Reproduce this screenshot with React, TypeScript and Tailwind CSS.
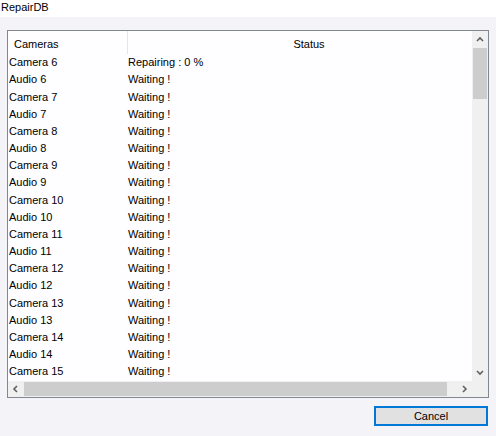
const rows: [string, string][] = [
  ["Camera 6", "Repairing : 0 %"],
  ["Audio 6", "Waiting !"],
  ["Camera 7", "Waiting !"],
  ["Audio 7", "Waiting !"],
  ["Camera 8", "Waiting !"],
  ["Audio 8", "Waiting !"],
  ["Camera 9", "Waiting !"],
  ["Audio 9", "Waiting !"],
  ["Camera 10", "Waiting !"],
  ["Audio 10", "Waiting !"],
  ["Camera 11", "Waiting !"],
  ["Audio 11", "Waiting !"],
  ["Camera 12", "Waiting !"],
  ["Audio 12", "Waiting !"],
  ["Camera 13", "Waiting !"],
  ["Audio 13", "Waiting !"],
  ["Camera 14", "Waiting !"],
  ["Audio 14", "Waiting !"],
  ["Camera 15", "Waiting !"],
];

function Chevron({ dir }: { dir: "up" | "down" | "left" | "right" }) {
  const pts = {
    up: "1,5 4,2 7,5",
    down: "1,2 4,5 7,2",
    left: "5,1 2,4 5,7",
    right: "3,1 6,4 3,7",
  }[dir];
  return (
    <svg width="8" height="8" viewBox="0 0 8 8">
      <polyline points={pts} fill="none" stroke="#606060" strokeWidth="1.6" />
    </svg>
  );
}

export default function App() {
  return (
    <div className="flex h-[436px] w-[496px] flex-col bg-[#f4f3f8] font-['Liberation_Sans',Arial,sans-serif] text-[11px] text-black">
      <div className="h-[17px] bg-white pl-[1px] leading-[15px]">RepairDB</div>

      {/* list view */}
      <div className="ml-[7px] mt-[13px] grid h-[368px] w-[482px] grid-cols-[1fr_16px] grid-rows-[1fr_16px] overflow-hidden border border-[#828790] bg-[#fefdff]">
        <div className="overflow-hidden">
          <div className="flex h-[23px]">
            <div className="w-[120px] shrink-0 border-r border-[#e5e5e5] pl-[6px] pt-[5px]">Cameras</div>
            <div className="w-[362px] shrink-0 pt-[5px] text-center">Status</div>
          </div>
          {rows.map(([name, status]) => (
            <div key={name} className="flex h-[17.17px] items-center">
              <div className="w-[120px] pl-[1px]">{name}</div>
              <div>{status}</div>
            </div>
          ))}
        </div>

        {/* vertical scrollbar */}
        <div className="flex flex-col bg-[#f0f0f0]">
          <div className="flex h-[17px] items-center justify-center">
            <Chevron dir="up" />
          </div>
          <div className="mx-[1px] h-[51px] bg-[#cdcdcd]" />
          <div className="flex-1" />
          <div className="flex h-[17px] items-center justify-center">
            <Chevron dir="down" />
          </div>
        </div>

        {/* horizontal scrollbar */}
        <div className="flex bg-[#f0f0f0]">
          <div className="flex w-[16px] items-center justify-center">
            <Chevron dir="left" />
          </div>
          <div className="my-[1px] w-[423px] bg-[#cdcdcd]" />
          <div className="flex-1" />
          <div className="flex w-[16px] items-center justify-center">
            <Chevron dir="right" />
          </div>
        </div>
        <div className="bg-[#f0f0f0]" />
      </div>

      <div className="ml-[374px] mt-[8px]">
        <button className="h-[20px] w-[114px] border-2 border-[#0078d7] bg-[#e1e1e1] leading-[14px]">
          Cancel
        </button>
      </div>
    </div>
  );
}
